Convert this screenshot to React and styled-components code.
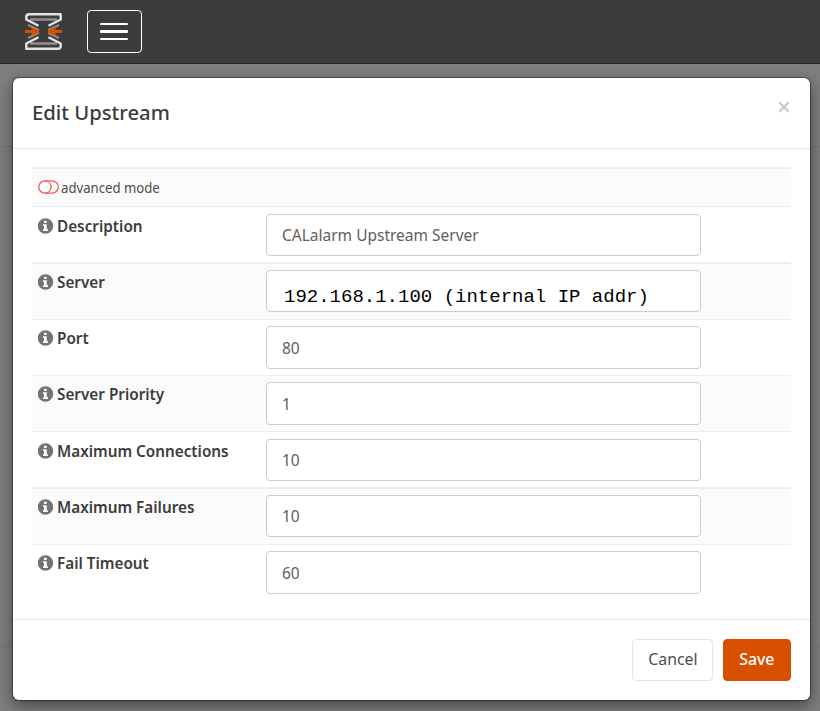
import React from "react";
import styled, { createGlobalStyle, css } from "styled-components";

const GlobalStyle = createGlobalStyle`
  * { box-sizing: border-box; }
  body {
    margin: 0;
    background: #7f7f7f;
    color: #3c3c3b;
    font-family: "Noto Sans", sans-serif;
    overflow: hidden;
  }
`;

const Page = styled.div`
  height: 711px;
  background: linear-gradient(#777, #777) 0 146px / 100% 1px no-repeat,
    linear-gradient(#777, #777) 0 646px / 100% 1px no-repeat, #7f7f7f;
`;

const Navbar = styled.header`
  height: 64px;
  display: flex;
  align-items: flex-start;
  padding: 10px 0 0 25px;
  background: #3c3c3b;
  border-bottom: 1px solid #252525;
`;

const Logo = styled.svg`
  width: 37px;
  height: 37px;
  margin-top: 3px;
`;

const MenuButton = styled.button`
  width: 55px;
  height: 43px;
  margin-left: 25px;
  padding: 0 0 0 12px;
  display: flex;
  flex-direction: column;
  justify-content: center;
  gap: 5px;
  background: transparent;
  border: 1px solid #fff;
  border-radius: 4px;
`;

const MenuBar = styled.span`
  width: 28px;
  height: ${({ $thick }) => ($thick ? 3 : 2)}px;
  border-radius: 1px;
  background: #fff;
`;

const Dialog = styled.section`
  width: 797px;
  height: 622px;
  margin: 14px 0 0 13px;
  display: flex;
  flex-direction: column;
  background: #fff;
  border-radius: 6px;
  box-shadow: 0 0 0 1px rgba(0, 0, 0, 0.35), 0 5px 16px rgba(0, 0, 0, 0.5);
`;

const DialogHeader = styled.div`
  height: 71px;
  flex: none;
  display: flex;
  justify-content: space-between;
  padding: 18px 20px 0 19px;
  border-bottom: 1px solid #e5e5e5;
`;

const fitted = css`
  display: inline-block;
  white-space: nowrap;
  transform: scaleX(${({ $fit = 1 }) => $fit});
  transform-origin: ${({ $origin = "left" }) => $origin} center;
`;

const Title = styled.h4`
  ${fitted}
  margin: 0;
  font-size: 20.5px;
  font-weight: 500;
  line-height: 32px;
`;

const CloseButton = styled.button`
  height: 12px;
  margin-top: 5px;
  padding: 0;
  border: 0;
  background: none;
  color: #cbcbcb;
`;

const CloseIcon = styled.svg`
  display: block;
  width: 12px;
  height: 12px;
`;

const DialogBody = styled.div`
  flex: 1;
  padding: 18px 19px 0;
`;

const ModeRow = styled.div`
  height: 39px;
  display: flex;
  align-items: center;
  gap: 2px;
  padding: 0 0 0 6px;
  background: #fbfbfb;
  border-top: 2px solid #eee;
`;

const ToggleIcon = styled.svg`
  width: 21px;
  height: 14px;
  margin-top: -2px;
`;

const ModeText = styled.span`
  ${fitted}
  font-size: 13.5px;
  color: #4c4c4b;
`;

const FieldRow = styled.div`
  height: ${({ $height }) => $height}px;
  display: flex;
  align-items: flex-start;
  background: ${({ $striped }) => ($striped ? "#fbfbfb" : "#fff")};
  border-top: ${({ $rule = 1 }) => $rule}px solid #eee;
`;

const FieldLabel = styled.label`
  width: 234px;
  flex: none;
  display: flex;
  align-items: center;
  gap: 3px;
  height: 24px;
  margin-top: ${({ $offset }) => $offset}px;
  padding-left: 6px;
`;

const InfoIcon = styled.svg`
  width: 16px;
  height: 16px;
  margin-top: -1px;
  flex: none;
  fill: #737373;
`;

const LabelText = styled.span`
  ${fitted}
  font-size: 16px;
  font-weight: 600;
  line-height: 24px;
`;

const FieldBox = styled.div`
  width: 435px;
  height: ${({ $height }) => $height}px;
  margin-top: ${({ $top }) => $top}px;
  display: flex;
  align-items: center;
  padding-left: 15px;
  background: #fff;
  border: 1px solid #ccc;
  border-radius: 4px;
`;

const FieldValue = styled.span`
  ${fitted}
  color: #606060;
  font-size: 15.5px;
  line-height: 24px;
`;

const MonoValue = styled.span`
  padding: 11px 0 0 2px;
  color: #000;
  font: 19px/24px "Liberation Mono", monospace;
  white-space: pre;
`;

const DialogFooter = styled.div`
  height: 81px;
  flex: none;
  display: flex;
  justify-content: flex-end;
  gap: 10px;
  padding: 19px 19px 0 0;
  border-top: 1px solid #e5e5e5;
`;

const Button = styled.button`
  width: ${({ $primary }) => ($primary ? 68 : 81)}px;
  height: 42px;
  padding: 0 0 2px;
  color: ${({ $primary }) => ($primary ? "#fff" : "#4c4c4b")};
  background: ${({ $primary }) => ($primary ? "#d94f00" : "#fff")};
  border: 1px solid ${({ $primary }) => ($primary ? "#d94f00" : "#e5e5e5")};
  border-radius: 4px;
  font-family: inherit;
  font-size: 16px;
  font-weight: ${({ $primary }) => ($primary ? 500 : 400)};
`;

const ButtonText = styled.span`
  ${fitted}
`;

const fields = [
  { label: "Description", value: "CALalarm Upstream Server", height: 56, top: 7, box: 42, offset: 7 },
  { label: "Server", value: "192.168.1.100 (internal IP addr)", mono: true, height: 57, top: 6, box: 42, rule: 2, offset: 6 },
  { label: "Port", value: "80", height: 56, top: 6, box: 43, offset: 6 },
  { label: "Server Priority", value: "1", height: 56, top: 6, box: 43, offset: 6 },
  { label: "Maximum Connections", value: "10", height: 56, top: 7, box: 42, offset: 7 },
  { label: "Maximum Failures", value: "10", height: 57, top: 6, box: 42, rule: 2, offset: 6 },
  { label: "Fail Timeout", value: "60", height: 56, top: 6, box: 43, offset: 6 },
];

function BrandLogo() {
  return (
    <Logo viewBox="0 0 37 37" fill="none" aria-label="Home">
      <path d="M5 6.500H32M5 30.500H32" stroke="#8e8e8e" strokeWidth="2.6" />
      <path d="M3 12L14 17.200M34 12L23 17.200M3 25L14 19.800M34 25L23 19.800" stroke="#8e8e8e" strokeWidth="2.2" />
      <path
        d="M13.500 12.800L1.300 6.500V4Q1.300 1.300 4 1.300H35.700V6.500L23.500 12.800M13.500 24.200L1.300 30.500V35.700H33Q35.700 35.700 35.700 33V30.500L23.500 24.200"
        stroke="#e2e3e7"
        strokeWidth="2.4"
        strokeLinejoin="round"
      />
      <path d="M0 18.500H12M37 18.500H25" stroke="#d94f00" strokeWidth="3" />
      <path d="M5.500 13.500L14 17.500V19.500L5.500 23.500L7.500 18.500ZM31.500 13.500L23 17.500V19.500L31.500 23.500L29.500 18.500Z" fill="#d94f00" />
    </Logo>
  );
}

function Field({ field, striped }) {
  return (
    <FieldRow $height={field.height} $rule={field.rule} $striped={striped}>
      <FieldLabel $offset={field.offset}>
        <InfoIcon viewBox="0 0 16 16">
          <path
            fillRule="evenodd"
            d="M7.500 .3A7.700 7.700 0 1 1 7.500 15.700A7.700 7.700 0 1 1 7.500 .3ZM6 2.700V5H8.700V2.700ZM5 6.300V8H6V11.300H5V13H10V11.300H8.800V6.300Z"
          />
        </InfoIcon>
        <LabelText $fit={0.955}>{field.label}</LabelText>
      </FieldLabel>
      <FieldBox $height={field.box} $top={field.top}>
        {field.mono ? <MonoValue>{field.value}</MonoValue> : <FieldValue $fit={1}>{field.value}</FieldValue>}
      </FieldBox>
    </FieldRow>
  );
}

export default function App() {
  return (
    <Page>
      <GlobalStyle />
      <Navbar>
        <BrandLogo />
        <MenuButton aria-label="Toggle navigation">
          <MenuBar />
          <MenuBar $thick />
          <MenuBar />
        </MenuButton>
      </Navbar>
      <Dialog role="dialog">
        <DialogHeader>
          <Title $fit={0.987}>Edit Upstream</Title>
          <CloseButton aria-label="Close">
            <CloseIcon viewBox="0 0 12 12">
              <path d="M1.300 1.300L10.700 10.700M10.700 1.300L1.300 10.700" stroke="currentColor" strokeWidth="2.300" />
            </CloseIcon>
          </CloseButton>
        </DialogHeader>
        <DialogBody>
          <ModeRow>
            <ToggleIcon viewBox="0 0 21 14" fill="none" stroke="#f05b5b" strokeWidth="1.300">
              <rect x=".7" y=".9" width="19.600" height="12.200" rx="6.100" />
              <path d="M7 .9C11 .9 13 4 13 7S11 13.100 7 13.100" />
            </ToggleIcon>
            <ModeText $fit={0.975}>advanced mode</ModeText>
          </ModeRow>
          {fields.map((field, i) => (
            <Field key={field.label} field={field} striped={i % 2 === 1} />
          ))}
        </DialogBody>
        <DialogFooter>
          <Button><ButtonText $fit={0.99} $origin="center">Cancel</ButtonText></Button>
          <Button $primary><ButtonText $fit={0.99} $origin="center">Save</ButtonText></Button>
        </DialogFooter>
      </Dialog>
    </Page>
  );
}
